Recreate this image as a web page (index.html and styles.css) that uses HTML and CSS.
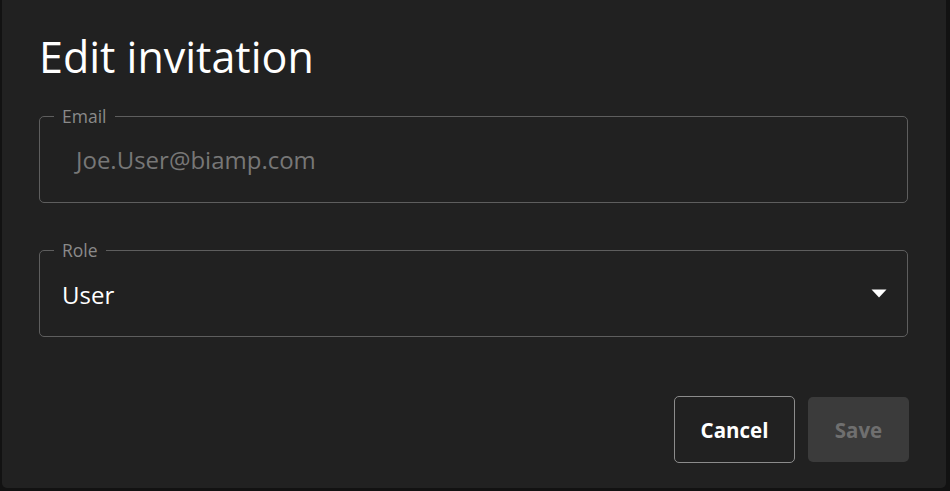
FILE: index.html
```html
<!DOCTYPE html>
<html>
<head>
<meta charset="utf-8">
<link rel="stylesheet" href="styles.css">
</head>
<body>
<div class="dialog">
  <h1 class="title">Edit invitation</h1>
  <div class="field">
    <span class="label">Email</span>
    <div class="value value-disabled">Joe.User@biamp.com</div>
  </div>
  <div class="field field-select">
    <span class="label">Role</span>
    <div class="value">User</div>
    <svg class="caret" width="16" height="9" viewBox="0 0 16 9"><polygon points="0.5,0.5 15.5,0.5 8,8.5" fill="#ffffff"/></svg>
  </div>
  <div class="actions">
    <button class="btn btn-outline">Cancel</button>
    <button class="btn btn-disabled">Save</button>
  </div>
</div>
</body>
</html>
```
FILE: styles.css
```css
html, body {
  margin: 0;
  padding: 0;
  background: #121212;
}
body {
  font-family: "Open Sans", "Noto Sans", sans-serif;
  width: 950px;
  height: 491px;
  overflow: hidden;
}
.dialog {
  box-sizing: border-box;
  width: 944px;
  height: 488px;
  margin-left: 2px;
  background: #212121;
  border-radius: 0 0 5px 5px;
  padding: 29px 38px 25px 37px;
  display: flex;
  flex-direction: column;
}
.title {
  margin: 0 0 31px 0;
  font-size: 43px;
  line-height: 56px;
  font-weight: 400;
  color: #ffffff;
}
.field {
  position: relative;
  box-sizing: border-box;
  height: 87px;
  border: 1px solid #5e5e5e;
  border-radius: 5px;
  display: flex;
  align-items: center;
  padding: 0 22px;
}
.field + .field {
  margin-top: 47px;
}
.label {
  position: absolute;
  top: -12px;
  left: 14px;
  padding: 0 8px;
  background: #212121;
  font-size: 17.5px;
  line-height: 22px;
  color: #8a8a8a;
}
.value {
  font-size: 24px;
  line-height: 30px;
  color: #ffffff;
  flex: 1;
}
.value-disabled {
  color: #777777;
  padding-left: 14px;
  margin-top: 1px;
}
.field-select .value {
  margin-top: 2px;
}
.caret {
  display: block;
  margin-right: -2px;
  margin-left: 8px;
}
.actions {
  margin-top: 59px;
  display: flex;
  justify-content: flex-end;
  align-items: center;
  gap: 13px;
  margin-right: -1px;
}
.btn {
  font-family: inherit;
  font-size: 20.5px;
  font-weight: 700;
  border-radius: 5px;
  box-sizing: border-box;
  cursor: pointer;
}
.btn-outline {
  width: 121px;
  height: 67px;
  background: transparent;
  color: #ffffff;
  border: 1px solid #8c8c8c;
}
.btn-disabled {
  width: 101px;
  height: 65px;
  background: #3b3b3b;
  color: #6f6f6f;
  border: none;
}
```
